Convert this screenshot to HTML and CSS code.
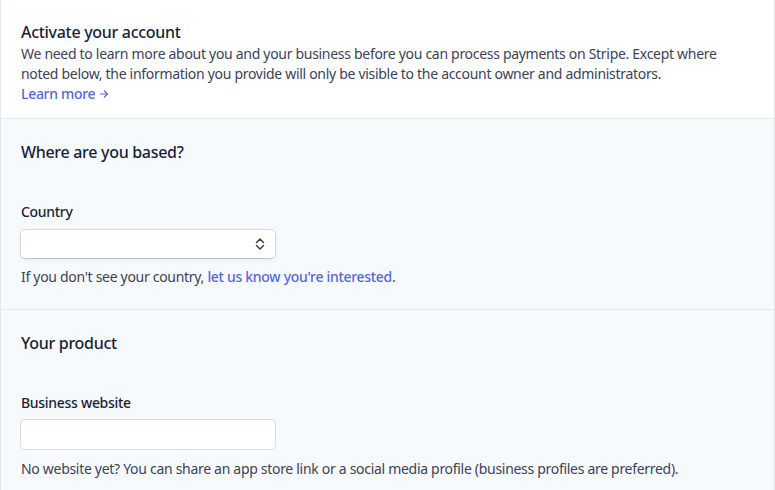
FILE: index.html
```html
<!DOCTYPE html>
<html>
<head>
<meta charset="utf-8">
<link rel="stylesheet" href="styles.css">
</head>
<body>
<div class="page">
  <section class="intro">
    <h1 class="title">Activate your account</h1>
    <p class="desc">We need to learn more about you and your business before you can process payments on Stripe. Except where noted below, the information you provide will only be visible to the account owner and administrators.</p>
    <a class="learn" href="#">Learn more <span class="arrow"><svg width="10" height="10" viewBox="0 0 10 10"><path d="M1 5h7.5M5 1.5l3.5 3.5L5 8.5" fill="none" stroke="currentColor" stroke-width="1.1"/></svg></span></a>
  </section>
  <section class="block">
    <h2 class="heading">Where are you based?</h2>
    <div class="field">
      <label class="label">Country</label>
      <div class="select">
        <svg class="chev" width="10" height="14" viewBox="0 0 10 14"><path d="M1.5 5.5L5 2l3.5 3.5M1.5 8.5L5 12l3.5-3.5" fill="none" stroke="#3c4257" stroke-width="1.5" stroke-linecap="round" stroke-linejoin="round"/></svg>
      </div>
      <p class="help">If you don't see your country, <a href="#" class="link">let us know you're interested</a>.</p>
    </div>
  </section>
  <section class="block">
    <h2 class="heading">Your product</h2>
    <div class="field">
      <label class="label">Business website</label>
      <div class="input"></div>
      <p class="help help-input">No website yet? You can share an app store link or a social media profile (business profiles are preferred).</p>
    </div>
  </section>
</div>
</body>
</html>
```
FILE: styles.css
```css
html, body { margin: 0; padding: 0; }
body {
  font-family: "Noto Sans", "Open Sans", sans-serif;
  font-size: 14px;
  letter-spacing: -0.3px;
  color: #3c4257;
  background: #fff;
}
.page {
  border-left: 1px solid #e3e8ee;
  border-right: 1px solid #e3e8ee;
  height: 490px;
  overflow: hidden;
  background: #f7fafc;
}
.intro {
  background: #fff;
  padding: 20px 20px 14px;
  border-bottom: 1px solid #e3e8ee;
}
.title {
  margin: 0;
  font-size: 16px;
  line-height: 24px;
  font-weight: 500;
  color: #1a1f36;
}
.desc {
  margin: 0;
  line-height: 20px;
}
.learn {
  display: inline-block;
  line-height: 20px;
  color: #5469d4;
  font-weight: 500;
  text-decoration: none;
}
.arrow { display: inline-block; vertical-align: 0; }
.block {
  padding: 21px 20px 22px;
  border-bottom: 1px solid #e3e8ee;
}
.heading {
  margin: 0;
  font-size: 16px;
  line-height: 24px;
  font-weight: 500;
  color: #1a1f36;
}
.field {
  margin-top: 38px;
  display: flex;
  flex-direction: column;
  align-items: flex-start;
}
.label {
  line-height: 20px;
  font-weight: 500;
  color: #1a1f36;
}
.select, .input {
  margin-top: 8px;
  box-sizing: border-box;
  width: 254px;
  height: 28px;
  background: #fff;
  border-radius: 4px;
  box-shadow: 0 0 0 1px rgba(60,66,87,0.16), 0 1px 1px rgba(0,0,0,0.08), 0 2px 5px rgba(60,66,87,0.08);
  display: flex;
  align-items: center;
  justify-content: flex-end;
}
.input { margin-top: 7px; height: 29px; box-shadow: 0 0 0 1px rgba(60,66,87,0.16); }
.chev { margin-right: 10px; }
.help {
  margin: 9px 0 0;
  line-height: 20px;
}
.help-input { margin-top: 10px; }
.link {
  color: #5469d4;
  font-weight: 500;
  text-decoration: none;
}
```
